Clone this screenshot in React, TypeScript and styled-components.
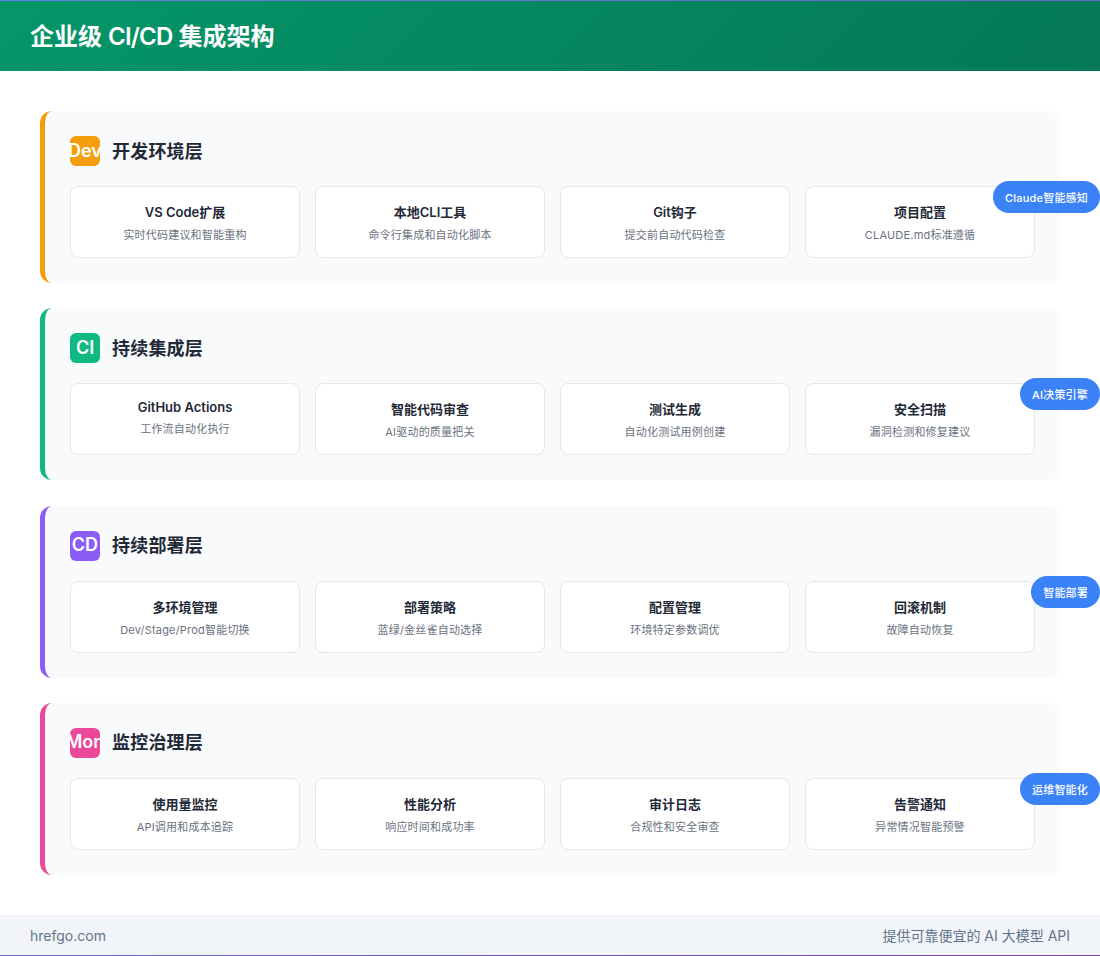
import styled, { createGlobalStyle } from "styled-components";

const GlobalStyle = createGlobalStyle`
  * {
    box-sizing: border-box;
  }
  html,
  body {
    margin: 0;
    padding: 0;
  }
  body {
    height: 956px;
    overflow: hidden;
    background: linear-gradient(135deg, #667eea 0%, #764ba2 100%);
    font-family: Inter, "Noto Sans CJK SC", sans-serif;
  }
`;

const Page = styled.div`
  height: 956px;
  padding: 1px 0;
`;

const Sheet = styled.div`
  height: 954px;
  background: #fff;
  display: flex;
  flex-direction: column;
`;

const Header = styled.header`
  height: 70px;
  padding: 0 30px 4px;
  display: flex;
  align-items: center;
  background: linear-gradient(135deg, #059669 0%, #047857 100%);
`;

const PageTitle = styled.h1`
  margin: 0;
  color: #fff;
  font-size: 24px;
  font-weight: 600;
`;

const Acronym = styled.span`
  letter-spacing: -0.8px;
`;

const Main = styled.main`
  flex: 1;
  padding: 40px;
  display: flex;
  flex-direction: column;
  gap: 25.33px;
`;

const Layer = styled.section<{ $accent: string }>`
  position: relative;
  padding: 25px;
  background: #f8fafc;
  border-left: 5px solid ${(p) => p.$accent};
  border-radius: 12px;
`;

const LayerHead = styled.div`
  display: flex;
  align-items: center;
  gap: 12px;
  margin-bottom: 20px;
`;

const LayerIcon = styled.div<{ $accent: string }>`
  width: 30px;
  height: 30px;
  flex: none;
  padding-bottom: 2px;
  display: flex;
  align-items: center;
  justify-content: center;
  overflow: hidden;
  border-radius: 6px;
  background: ${(p) => p.$accent};
  color: #fff;
  font-size: 18px;
  font-weight: 600;
`;

const LayerTitle = styled.h2`
  margin: 0;
  padding-bottom: 3px;
  color: #1f2937;
  font-size: 18px;
  font-weight: 600;
  letter-spacing: 0.2px;
`;

const Cards = styled.div`
  display: grid;
  grid-template-columns: repeat(4, 1fr);
  gap: 15px;
`;

const Card = styled.div`
  padding: 15px;
  background: #fff;
  border: 1px solid #e5e7eb;
  border-radius: 8px;
  text-align: center;
`;

const CardTitle = styled.div`
  margin-bottom: 5px;
  color: #1f2937;
  font-size: 13px;
  font-weight: 600;
`;

const CardText = styled.div`
  color: #6b7280;
  font-size: 11px;
  letter-spacing: 0.2px;
`;

const Badge = styled.div`
  position: absolute;
  top: 50%;
  right: -40px;
  transform: translateY(-50%);
  padding: 8px 12px;
  border-radius: 20px;
  background: #3b82f6;
  color: #fff;
  font-size: 11px;
  font-weight: 500;
  letter-spacing: 0.2px;
  white-space: nowrap;
`;

const Footer = styled.footer`
  height: 40px;
  padding: 0 30px;
  display: flex;
  align-items: center;
  justify-content: space-between;
  background: #f1f5f9;
  color: #64748b;
  font-size: 14px;
`;

const layers = [
  {
    icon: "Dev",
    title: "开发环境层",
    accent: "#f59e0b",
    badge: "Claude智能感知",
    cards: [
      ["VS Code扩展", "实时代码建议和智能重构"],
      ["本地CLI工具", "命令行集成和自动化脚本"],
      ["Git钩子", "提交前自动代码检查"],
      ["项目配置", "CLAUDE.md标准遵循"],
    ],
  },
  {
    icon: "CI",
    title: "持续集成层",
    accent: "#10b981",
    badge: "AI决策引擎",
    cards: [
      ["GitHub Actions", "工作流自动化执行"],
      ["智能代码审查", "AI驱动的质量把关"],
      ["测试生成", "自动化测试用例创建"],
      ["安全扫描", "漏洞检测和修复建议"],
    ],
  },
  {
    icon: "CD",
    title: "持续部署层",
    accent: "#8b5cf6",
    badge: "智能部署",
    cards: [
      ["多环境管理", "Dev/Stage/Prod智能切换"],
      ["部署策略", "蓝绿/金丝雀自动选择"],
      ["配置管理", "环境特定参数调优"],
      ["回滚机制", "故障自动恢复"],
    ],
  },
  {
    icon: "Mon",
    title: "监控治理层",
    accent: "#ec4899",
    badge: "运维智能化",
    cards: [
      ["使用量监控", "API调用和成本追踪"],
      ["性能分析", "响应时间和成功率"],
      ["审计日志", "合规性和安全审查"],
      ["告警通知", "异常情况智能预警"],
    ],
  },
];

export default function App() {
  return (
    <>
      <GlobalStyle />
      <Page>
        <Sheet>
          <Header>
            <PageTitle>
              企业级 <Acronym>CI/CD</Acronym> 集成架构
            </PageTitle>
          </Header>
          <Main>
            {layers.map((layer) => (
              <Layer key={layer.icon} $accent={layer.accent}>
                <LayerHead>
                  <LayerIcon $accent={layer.accent}>{layer.icon}</LayerIcon>
                  <LayerTitle>{layer.title}</LayerTitle>
                </LayerHead>
                <Cards>
                  {layer.cards.map(([title, text]) => (
                    <Card key={title}>
                      <CardTitle>{title}</CardTitle>
                      <CardText>{text}</CardText>
                    </Card>
                  ))}
                </Cards>
                <Badge>{layer.badge}</Badge>
              </Layer>
            ))}
          </Main>
          <Footer>
            <span>hrefgo.com</span>
            <span>提供可靠便宜的 AI 大模型 API</span>
          </Footer>
        </Sheet>
      </Page>
    </>
  );
}
